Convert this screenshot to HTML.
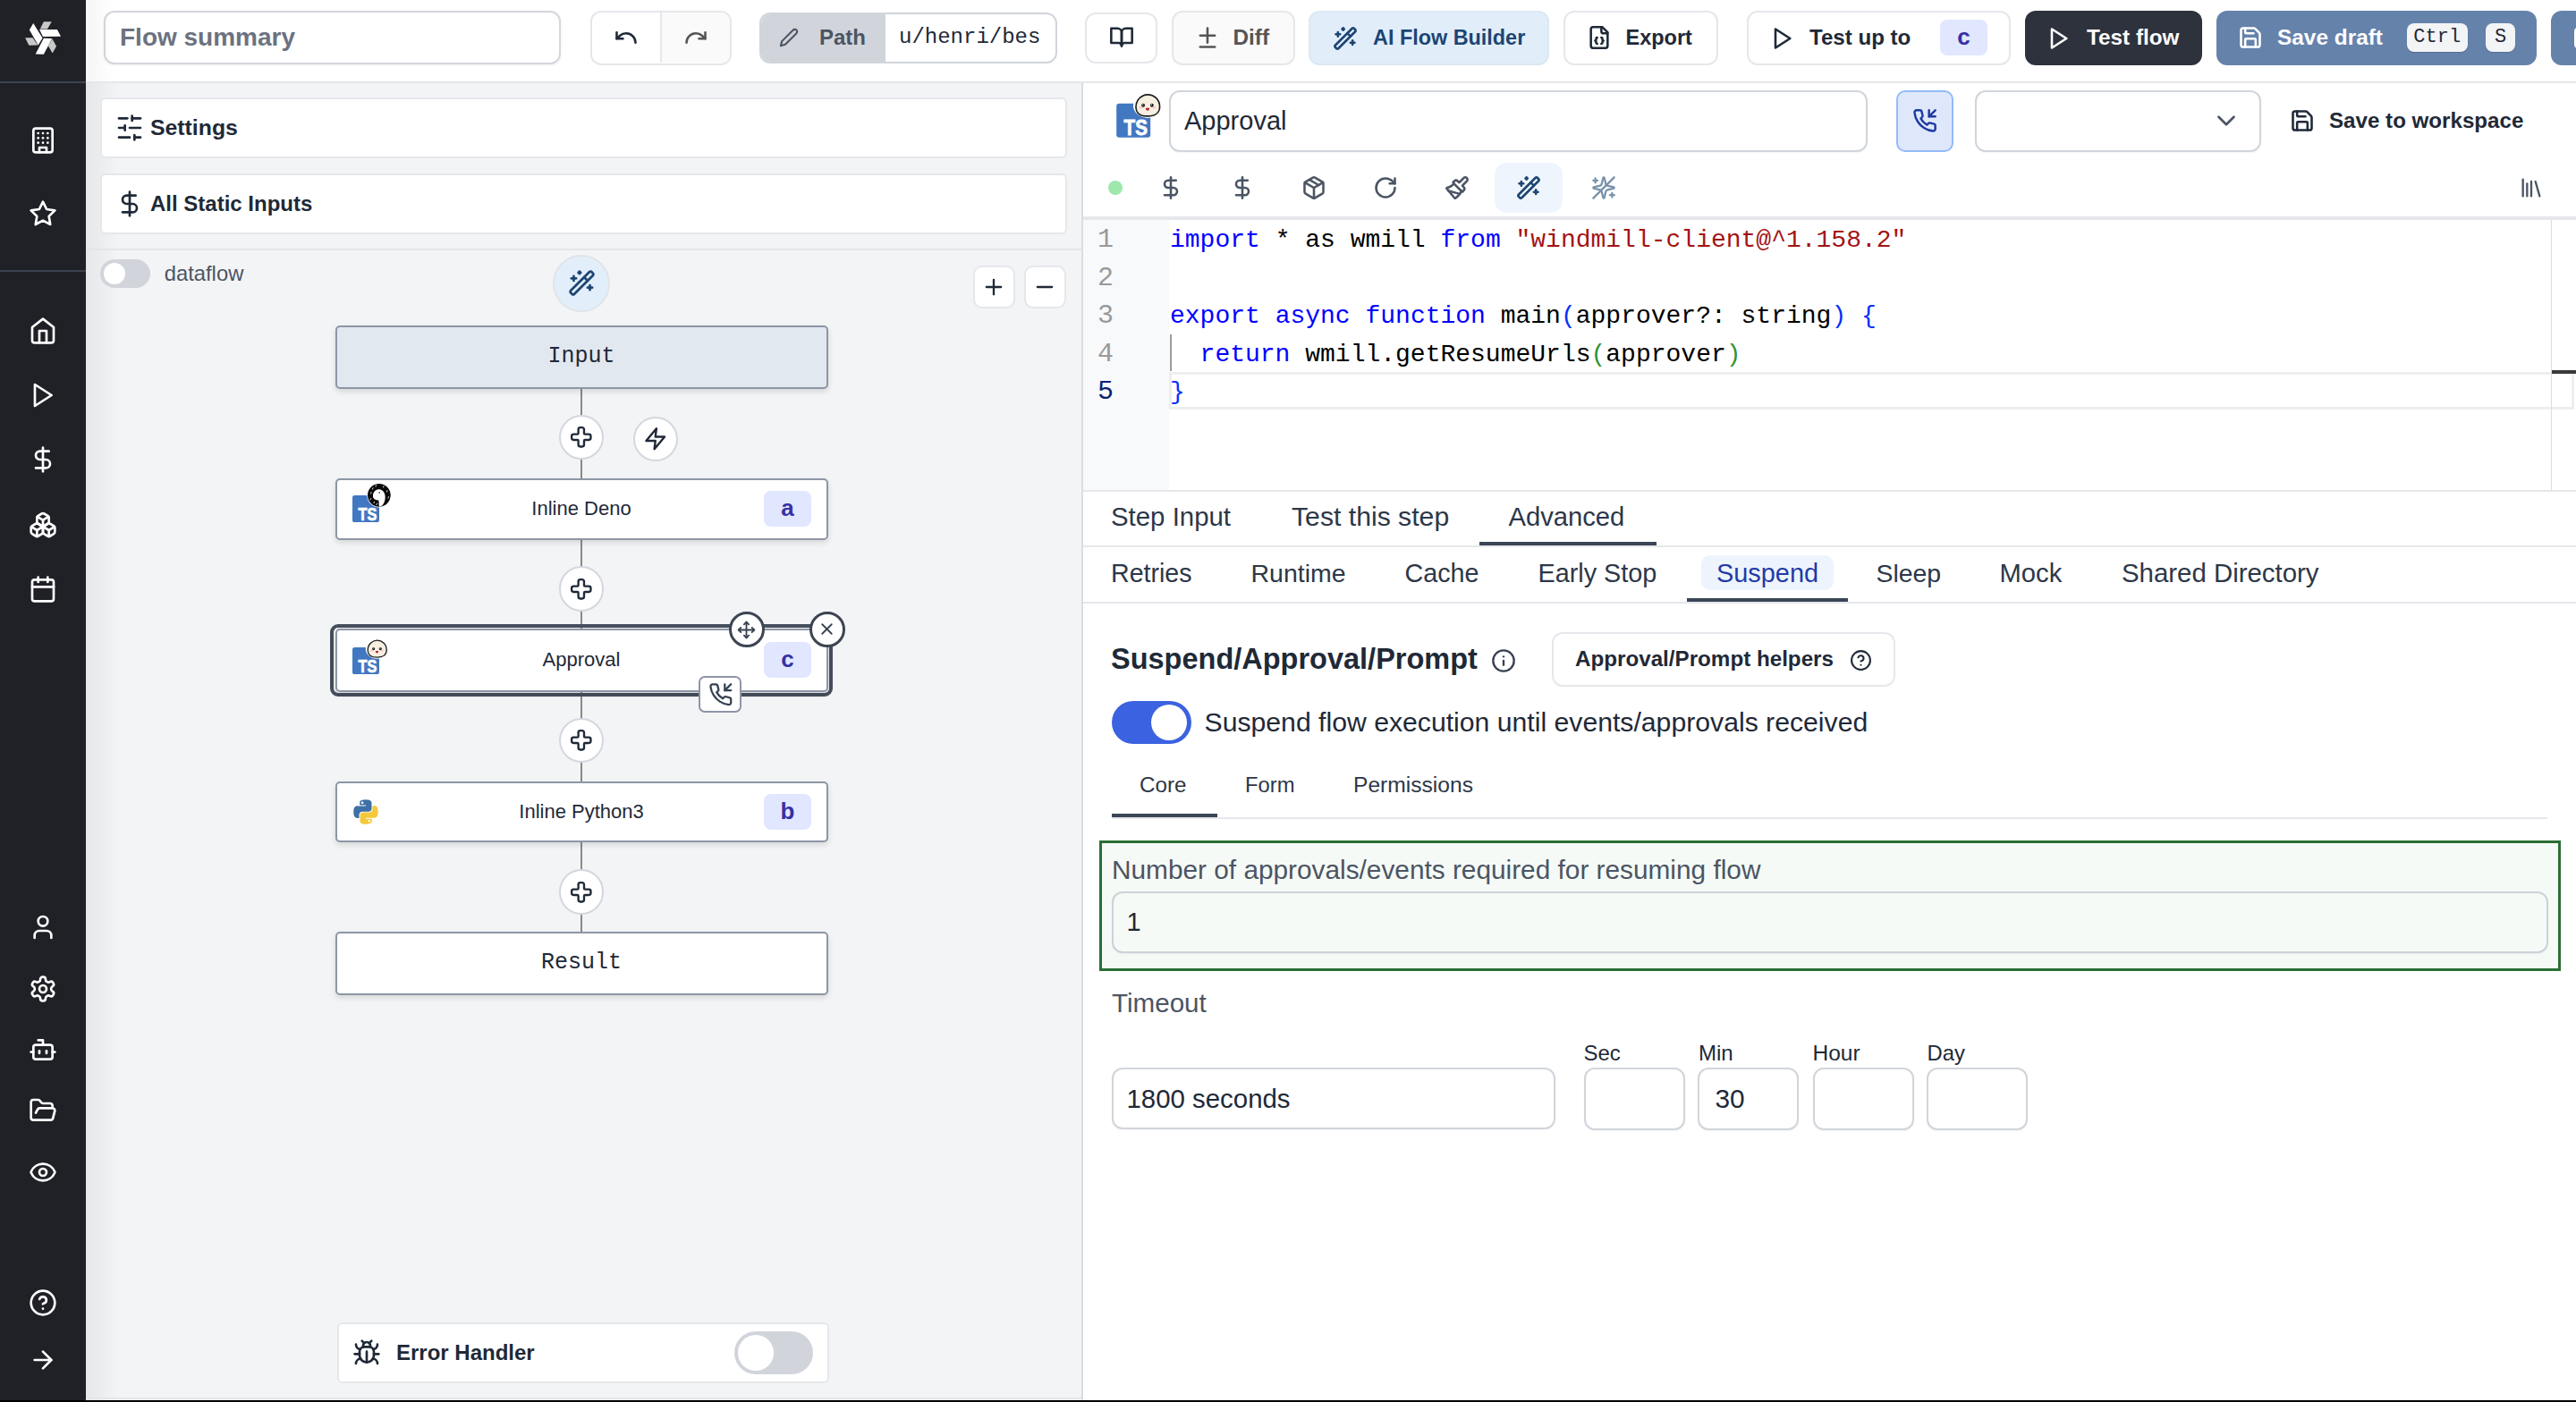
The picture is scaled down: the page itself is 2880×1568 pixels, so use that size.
<!DOCTYPE html>
<html><head><meta charset="utf-8">
<style>
html,body{margin:0;padding:0;width:2880px;height:1568px;overflow:hidden;background:#000;}
body{font-family:"Liberation Sans",sans-serif;color:#1f2937;position:relative;}
.a{position:absolute;box-sizing:border-box;}
.t{position:absolute;white-space:nowrap;line-height:40px;height:40px;}
.m{font-family:"Liberation Mono",monospace;}
.b{font-weight:700;}
svg{position:absolute;overflow:visible;}
.ic{fill:none;stroke-linecap:round;stroke-linejoin:round;}
</style></head><body>
<!-- main background -->
<div class="a" style="left:0;top:0;width:2880px;height:1566px;background:#fff;"></div>

<!-- SIDEBAR -->
<div class="a" style="left:0;top:0;width:96px;height:1566px;background:#202127;"></div>
<div class="a" style="left:0;top:91px;width:96px;height:2px;background:#3b4250;"></div>
<div class="a" style="left:0;top:302px;width:96px;height:2px;background:#3b4250;"></div>
<!-- logo -->
<svg style="left:16px;top:10px;" width="64" height="64" viewBox="0 0 1402 1402">
 <g fill="#fff">
  <polygon points="465,350 690,712 585,888 370,515"/>
  <polygon points="615,505 1050,505 1140,675 700,680"/>
  <polygon points="720,720 925,725 720,1110 520,1105"/>
 </g>
 <g fill="#c9c9c9">
  <polygon points="720,310 915,310 810,495 630,495"/>
  <polygon points="265,705 450,705 575,885 360,890"/>
  <polygon points="930,735 1030,915 935,1085 830,905"/>
 </g>
</svg>
<svg class="ic" style="left:32px;top:141px" width="32" height="32" viewBox="0 0 24 24" stroke="#fff" stroke-width="2"><rect width="16" height="20" x="4" y="2" rx="2" ry="2"/><path d="M9 22v-4h6v4"/><path d="M8 6h.01"/><path d="M16 6h.01"/><path d="M12 6h.01"/><path d="M12 10h.01"/><path d="M12 14h.01"/><path d="M16 10h.01"/><path d="M16 14h.01"/><path d="M8 10h.01"/><path d="M8 14h.01"/></svg>
<svg class="ic" style="left:32px;top:223px" width="32" height="32" viewBox="0 0 24 24" stroke="#fff" stroke-width="2"><polygon points="12 2 15.09 8.26 22 9.27 17 14.14 18.18 21.02 12 17.77 5.82 21.02 7 14.14 2 9.27 8.91 8.26 12 2"/></svg>
<svg class="ic" style="left:32px;top:354px" width="32" height="32" viewBox="0 0 24 24" stroke="#fff" stroke-width="2"><path d="m3 9 9-7 9 7v11a2 2 0 0 1-2 2H5a2 2 0 0 1-2-2z"/><polyline points="9 22 9 12 15 12 15 22"/></svg>
<svg class="ic" style="left:31px;top:426px" width="32" height="32" viewBox="0 0 24 24" stroke="#fff" stroke-width="2"><polygon points="6 3 20 12 6 21 6 3"/></svg>
<svg class="ic" style="left:32px;top:498px" width="32" height="32" viewBox="0 0 24 24" stroke="#fff" stroke-width="2"><line x1="12" x2="12" y1="2" y2="22"/><path d="M17 5H9.5a3.5 3.5 0 0 0 0 7h5a3.5 3.5 0 0 1 0 7H6"/></svg>
<svg class="ic" style="left:32px;top:571px" width="32" height="32" viewBox="0 0 24 24" stroke="#fff" stroke-width="2"><path d="M2.97 12.92A2 2 0 0 0 2 14.63v3.24a2 2 0 0 0 .97 1.71l3 1.8a2 2 0 0 0 2.06 0L12 19v-5.5l-5-3-4.03 2.42Z"/><path d="m7 16.5-4.74-2.85"/><path d="m7 16.5 5-3"/><path d="M7 16.5v5.17"/><path d="M12 13.5V19l3.970 2.38a2 2 0 0 0 2.06 0l3-1.8a2 2 0 0 0 .97-1.71v-3.24a2 2 0 0 0-.97-1.71L17 10.5l-5 3Z"/><path d="m17 16.5-5-3"/><path d="m17 16.5 4.74-2.85"/><path d="M17 16.5v5.17"/><path d="M7.97 4.42A2 2 0 0 0 7 6.13v4.37l5 3 5-3V6.13a2 2 0 0 0-.97-1.71l-3-1.8a2 2 0 0 0-2.06 0l-3 1.8Z"/><path d="M12 8 7.26 5.15"/><path d="m12 8 4.74-2.85"/><path d="M12 13.5V8"/></svg>
<svg class="ic" style="left:32px;top:643px" width="32" height="32" viewBox="0 0 24 24" stroke="#fff" stroke-width="2"><path d="M8 2v4"/><path d="M16 2v4"/><rect width="18" height="18" x="3" y="4" rx="2"/><path d="M3 10h18"/></svg>
<svg class="ic" style="left:32px;top:1021px" width="32" height="32" viewBox="0 0 24 24" stroke="#fff" stroke-width="2"><path d="M19 21v-2a4 4 0 0 0-4-4H9a4 4 0 0 0-4 4v2"/><circle cx="12" cy="7" r="4"/></svg>
<svg class="ic" style="left:32px;top:1090px" width="32" height="32" viewBox="0 0 24 24" stroke="#fff" stroke-width="2"><path d="M12.22 2h-.44a2 2 0 0 0-2 2v.18a2 2 0 0 1-1 1.73l-.43.25a2 2 0 0 1-2 0l-.15-.08a2 2 0 0 0-2.73.73l-.22.38a2 2 0 0 0 .73 2.73l.15.1a2 2 0 0 1 1 1.72v.51a2 2 0 0 1-1 1.74l-.15.09a2 2 0 0 0-.73 2.73l.22.38a2 2 0 0 0 2.73.73l.15-.08a2 2 0 0 1 2 0l.43.25a2 2 0 0 1 1 1.73V20a2 2 0 0 0 2 2h.44a2 2 0 0 0 2-2v-.18a2 2 0 0 1 1-1.73l.43-.25a2 2 0 0 1 2 0l.15.08a2 2 0 0 0 2.73-.73l.22-.39a2 2 0 0 0-.73-2.73l-.15-.08a2 2 0 0 1-1-1.74v-.5a2 2 0 0 1 1-1.74l.15-.09a2 2 0 0 0 .73-2.73l-.22-.38a2 2 0 0 0-2.73-.73l-.15.08a2 2 0 0 1-2 0l-.43-.25a2 2 0 0 1-1-1.73V4a2 2 0 0 0-2-2z"/><circle cx="12" cy="12" r="3"/></svg>
<svg class="ic" style="left:32px;top:1158px" width="32" height="32" viewBox="0 0 24 24" stroke="#fff" stroke-width="2"><path d="M12 8V4H8"/><rect width="16" height="12" x="4" y="8" rx="2"/><path d="M2 14h2"/><path d="M20 14h2"/><path d="M15 13v2"/><path d="M9 13v2"/></svg>
<svg class="ic" style="left:32px;top:1226px" width="32" height="32" viewBox="0 0 24 24" stroke="#fff" stroke-width="2"><path d="m6 14 1.5-2.9A2 2 0 0 1 9.24 10H20a2 2 0 0 1 1.94 2.5l-1.54 6a2 2 0 0 1-1.95 1.5H4a2 2 0 0 1-2-2V5a2 2 0 0 1 2-2h3.9a2 2 0 0 1 1.69.9l.81 1.2a2 2 0 0 0 1.67.9H18a2 2 0 0 1 2 2v2"/></svg>
<svg class="ic" style="left:32px;top:1295px" width="32" height="32" viewBox="0 0 24 24" stroke="#fff" stroke-width="2"><path d="M2.062 12.348a1 1 0 0 1 0-.696 10.75 10.75 0 0 1 19.876 0 1 1 0 0 1 0 .696 10.75 10.75 0 0 1-19.876 0"/><circle cx="12" cy="12" r="3"/></svg>
<svg class="ic" style="left:32px;top:1441px" width="32" height="32" viewBox="0 0 24 24" stroke="#fff" stroke-width="2"><circle cx="12" cy="12" r="10"/><path d="M9.09 9a3 3 0 0 1 5.83 1c0 2-3 3-3 3"/><path d="M12 17h.01"/></svg>
<svg class="ic" style="left:32px;top:1505px" width="32" height="32" viewBox="0 0 24 24" stroke="#fff" stroke-width="2"><path d="M5 12h14"/><path d="m12 5 7 7-7 7"/></svg>

<!-- TOPBAR -->
<div class="a" style="left:96px;top:0;width:2784px;height:91px;background:#fff;"></div>
<div class="a" style="left:96px;top:91px;width:2784px;height:2px;background:#e5e7eb;"></div>

<!-- flow summary -->
<div class="a" style="left:116px;top:12px;width:511px;height:60px;border:2px solid #d4d7dd;border-radius:12px;background:#fff;box-shadow:0 1px 3px rgba(0,0,0,.07);"></div>
<div class="t b" style="left:134px;top:22px;font-size:28px;color:#6b7280;">Flow summary</div>
<!-- undo/redo -->
<div class="a" style="left:660px;top:12px;width:158px;height:61px;border:2px solid #e5e7eb;border-radius:12px;background:#fff;overflow:hidden;">
  <div class="a" style="left:76px;top:0;width:78px;height:56px;background:#fafafa;border-left:2px solid #e5e7eb;"></div>
</div>
<svg class="ic" style="left:686.0px;top:28.0px" width="28" height="28" viewBox="0 0 24 24" stroke="#1f2937" stroke-width="2.2"><path d="M3 7v6h6"/><path d="M21 17a9 9 0 0 0-9-9 9 9 0 0 0-6 2.3L3 13"/></svg>
<svg class="ic" style="left:764.0px;top:28.0px" width="28" height="28" viewBox="0 0 24 24" stroke="#555" stroke-width="2.2"><path d="M21 7v6h-6"/><path d="M3 17a9 9 0 0 1 9-9 9 9 0 0 1 6 2.3l3 2.7"/></svg>
<!-- path -->
<div class="a" style="left:849px;top:14px;width:333px;height:57px;border:2px solid #d1d5db;border-radius:12px;background:#fff;overflow:hidden;">
  <div class="a" style="left:-2px;top:-2px;width:141px;height:56px;background:#d1d5db;"></div>
</div>
<svg class="ic" style="left:870.6px;top:31.25px" width="22" height="22" viewBox="0 0 24 24" stroke="#4b5563" stroke-width="2.3"><path d="M17 3a2.85 2.83 0 1 1 4 4L7.5 20.5 2 22l1.5-5.5Z"/></svg>
<div class="t b" style="left:916px;top:22px;font-size:24px;color:#4b5563;">Path</div>
<div class="t m" style="left:1005px;top:22px;font-size:24px;color:#1f2937;">u/henri/bes</div>
<!-- book -->
<div class="a" style="left:1213px;top:14px;width:81px;height:57px;border:2px solid #e5e7eb;border-radius:12px;background:#fff;"></div>
<svg class="ic" style="left:1240.0px;top:27px" width="28" height="28" viewBox="0 0 24 24" stroke="#1f2937" stroke-width="2.2"><path d="M2 4h6a4 4 0 0 1 4 4v13a3 3 0 0 0-3-3H2z"/><path d="M22 4h-6a4 4 0 0 0-4 4v13a3 3 0 0 1 3-3h7z"/></svg>
<!-- diff -->
<div class="a" style="left:1310px;top:12px;width:138px;height:61px;border:2px solid #e5e7eb;border-radius:12px;background:#fafafa;"></div>
<svg class="ic" style="left:1336.0px;top:28.0px" width="28" height="28" viewBox="0 0 24 24" stroke="#555" stroke-width="2.2"><path d="M12 3v14"/><path d="M5 10h14"/><path d="M5 21h14"/></svg>
<div class="t b" style="left:1378.5px;top:22px;font-size:24.3px;color:#555;">Diff</div>
<!-- AI flow builder -->
<div class="a" style="left:1463px;top:12px;width:269px;height:61px;border:2px solid #dbe8f4;border-radius:12px;background:#e1eefa;"></div>
<svg class="ic" style="left:1490px;top:28.5px" width="28" height="28" viewBox="0 0 24 24" stroke="#1d4573" stroke-width="2.2"><path d="m21.64 3.64-1.28-1.28a1.21 1.21 0 0 0-1.72 0L2.36 18.64a1.21 1.21 0 0 0 0 1.72l1.28 1.28a1.2 1.2 0 0 0 1.72 0L21.640 5.36a1.2 1.2 0 0 0 0-1.72"/><path d="m14 7 3 3"/><path d="M5 6v4"/><path d="M19 14v4"/><path d="M10 2v2"/><path d="M7 8H3"/><path d="M21 16h-4"/><path d="M11 3H9"/></svg>
<div class="t b" style="left:1535px;top:22px;font-size:23.4px;color:#1d4573;">AI Flow Builder</div>
<!-- export -->
<div class="a" style="left:1748px;top:12px;width:173px;height:61px;border:2px solid #e5e7eb;border-radius:12px;background:#fff;"></div>
<svg class="ic" style="left:1774.0px;top:28.0px" width="28" height="28" viewBox="0 0 24 24" stroke="#1f2937" stroke-width="2.2"><path d="M15 2H6a2 2 0 0 0-2 2v16a2 2 0 0 0 2 2h12a2 2 0 0 0 2-2V7Z"/><path d="M14 2v4a2 2 0 0 0 2 2h4"/><path d="M10 12a1 1 0 0 0-1 1v1a1 1 0 0 1-1 1 1 1 0 0 1 1 1v1a1 1 0 0 0 1 1"/><path d="M14 18a1 1 0 0 0 1-1v-1a1 1 0 0 1 1-1 1 1 0 0 1-1-1v-1a1 1 0 0 0-1-1"/></svg>
<div class="t b" style="left:1817.5px;top:22px;font-size:23.5px;color:#1f2937;">Export</div>
<!-- test up to -->
<div class="a" style="left:1953px;top:12px;width:295px;height:61px;border:2px solid #e5e7eb;border-radius:12px;background:#fff;"></div>
<svg class="ic" style="left:1978.0px;top:28.5px" width="28" height="28" viewBox="0 0 24 24" stroke="#1f2937" stroke-width="2.2"><polygon points="6 3 20 12 6 21 6 3"/></svg>
<div class="t b" style="left:2023px;top:22px;font-size:24.1px;color:#1f2937;">Test up to</div>
<div class="a" style="left:2169px;top:22px;width:53px;height:40px;border-radius:8px;background:#e0e7ff;"></div>
<div class="t b" style="left:2169px;top:21px;width:53px;text-align:center;font-size:26px;color:#3730a3;">c</div>
<!-- test flow -->
<div class="a" style="left:2264px;top:12px;width:198px;height:60.5px;border-radius:12px;background:#2e323c;"></div>
<svg class="ic" style="left:2287.0px;top:28.5px" width="28" height="28" viewBox="0 0 24 24" stroke="#fff" stroke-width="2.2"><polygon points="6 3 20 12 6 21 6 3"/></svg>
<div class="t b" style="left:2333px;top:22px;font-size:24.3px;color:#fff;">Test flow</div>
<!-- save draft -->
<div class="a" style="left:2478px;top:12px;width:358px;height:60.5px;border-radius:12px;background:#6582ab;"></div>
<svg class="ic" style="left:2502.0px;top:28.0px" width="28" height="28" viewBox="0 0 24 24" stroke="#fff" stroke-width="2.2"><path d="M15.2 3a2 2 0 0 1 1.4.6l3.8 3.8a2 2 0 0 1 .6 1.4V19a2 2 0 0 1-2 2H5a2 2 0 0 1-2-2V5a2 2 0 0 1 2-2z"/><path d="M17 21v-7a1 1 0 0 0-1-1H8a1 1 0 0 0-1 1v7"/><path d="M7 3v4a1 1 0 0 0 1 1h7"/></svg>
<div class="t b" style="left:2546px;top:22px;font-size:24.4px;color:#fff;">Save draft</div>
<div class="a" style="left:2691px;top:26px;width:67.5px;height:32px;border-radius:8px;background:#f3f4f6;box-shadow:0 1px 1px rgba(0,0,0,.15);"></div>
<div class="t m" style="left:2691px;top:22px;width:67.5px;text-align:center;font-size:22px;color:#1f2937;">Ctrl</div>
<div class="a" style="left:2779px;top:26px;width:33px;height:32px;border-radius:8px;background:#f3f4f6;box-shadow:0 1px 1px rgba(0,0,0,.15);"></div>
<div class="t m" style="left:2779px;top:22px;width:33px;text-align:center;font-size:22px;color:#1f2937;">S</div>
<!-- cut-off button -->
<div class="a" style="left:2852px;top:12px;width:60px;height:60.5px;border-radius:12px;background:#6582ab;"></div>
<div class="a" style="left:2878px;top:31px;width:12px;height:22.5px;border-radius:4px;border:2.5px solid #fff;"></div>


<!-- LEFT PANEL -->
<div class="a" style="left:96px;top:93px;width:1113px;height:1473px;background:#f3f4f6;"></div>
<div class="a" style="left:1209px;top:93px;width:2px;height:1473px;background:#dcdcde;"></div>

<!-- left shadow -->
<div class="a" style="left:96px;top:93px;width:36px;height:1473px;background:linear-gradient(90deg,rgba(0,0,0,.055),rgba(0,0,0,0));"></div>
<div class="a" style="left:96px;top:0px;width:30px;height:91px;background:linear-gradient(90deg,rgba(0,0,0,.04),rgba(0,0,0,0));"></div>
<!-- settings -->
<div class="a" style="left:112px;top:109px;width:1081px;height:68px;border:2px solid #e5e7eb;border-radius:6px;background:#fff;"></div>
<svg class="ic" style="left:129px;top:127px" width="32" height="32" viewBox="0 0 24 24" stroke="#1f2937" stroke-width="2"><line x1="21" x2="14" y1="4" y2="4"/><line x1="10" x2="3" y1="4" y2="4"/><line x1="21" x2="12" y1="12" y2="12"/><line x1="8" x2="3" y1="12" y2="12"/><line x1="21" x2="16" y1="20" y2="20"/><line x1="12" x2="3" y1="20" y2="20"/><line x1="14" x2="14" y1="2" y2="6"/><line x1="8" x2="8" y1="10" y2="14"/><line x1="16" x2="16" y1="18" y2="22"/></svg>
<div class="t b" style="left:168px;top:122.5px;font-size:24.8px;color:#1f2937;">Settings</div>
<div class="a" style="left:112px;top:194px;width:1081px;height:68px;border:2px solid #e5e7eb;border-radius:6px;background:#fff;"></div>
<svg class="ic" style="left:129px;top:212px" width="32" height="32" viewBox="0 0 24 24" stroke="#1f2937" stroke-width="2"><line x1="12" x2="12" y1="2" y2="22"/><path d="M17 5H9.5a3.5 3.5 0 0 0 0 7h5a3.5 3.5 0 0 1 0 7H6"/></svg>
<div class="t b" style="left:168px;top:207.5px;font-size:24px;color:#1f2937;">All Static Inputs</div>
<div class="a" style="left:96px;top:278px;width:1113px;height:2px;background:#e3e5e8;"></div>
<!-- dataflow toggle -->
<div class="a" style="left:112px;top:289.5px;width:56px;height:32.5px;border-radius:17px;background:#d1d5db;"></div>
<div class="a" style="left:116px;top:293.6px;width:24px;height:24px;border-radius:50%;background:#fff;"></div>
<div class="t" style="left:183.7px;top:286.2px;font-size:23.8px;color:#4b5563;">dataflow</div>
<!-- wand circle -->
<div class="a" style="left:617.9px;top:284.6px;width:64px;height:64px;border-radius:50%;border:2px solid #e1e4e9;background:#e2effa;"></div>
<svg class="ic" style="left:634.6px;top:301px" width="31" height="31" viewBox="0 0 24 24" stroke="#1d4573" stroke-width="2.1"><path d="m21.64 3.64-1.28-1.28a1.21 1.21 0 0 0-1.72 0L2.36 18.64a1.21 1.21 0 0 0 0 1.72l1.28 1.28a1.2 1.2 0 0 0 1.72 0L21.64 5.36a1.2 1.2 0 0 0 0-1.72"/><path d="m14 7 3 3"/><path d="M5 6v4"/><path d="M19 14v4"/><path d="M10 2v2"/><path d="M7 8H3"/><path d="M21 16h-4"/><path d="M11 3H9"/></svg>
<!-- zoom buttons -->
<div class="a" style="left:1087.5px;top:296.5px;width:47px;height:48.5px;border:2px solid #e5e7eb;border-radius:10px;background:#fff;"></div>
<svg class="ic" style="left:1096.9px;top:306.7px" width="28" height="28" viewBox="0 0 24 24" stroke="#1f2937" stroke-width="2"><path d="M5 12h14"/><path d="M12 5v14"/></svg>
<div class="a" style="left:1144.5px;top:296.5px;width:47px;height:48.5px;border:2px solid #e5e7eb;border-radius:10px;background:#fff;"></div>
<svg class="ic" style="left:1154.1px;top:306.7px" width="28" height="28" viewBox="0 0 24 24" stroke="#1f2937" stroke-width="2"><path d="M5 12h14"/></svg>
<!-- edges -->
<div class="a" style="left:649px;top:434px;width:2px;height:608px;background:#8a8a8a;"></div>
<div class="a" style="left:374.5px;top:363.5px;width:551px;height:71.5px;border:2px solid #8d96a6;border-radius:5px;background:#e2e8f0;box-shadow:0 3px 6px rgba(0,0,0,.12);"></div>
<div class="t m" style="left:375.5px;top:379.25px;width:549px;text-align:center;font-size:25px;color:#1f2937;">Input</div>
<div class="a" style="left:624.8px;top:463.9px;width:50.2px;height:50.2px;border-radius:50%;border:2px solid #d4d7dd;background:#fff;"></div>
<svg class="ic" style="left:637.3000000000001px;top:476.2px" width="25.6" height="25.6" viewBox="0 0 24 24" stroke="#1f2937" stroke-width="2.2"><path d="M4 9a2 2 0 0 0-2 2v2a2 2 0 0 0 2 2h4a1 1 0 0 1 1 1v4a2 2 0 0 0 2 2h2a2 2 0 0 0 2-2v-4a1 1 0 0 1 1-1h4a2 2 0 0 0 2-2v-2a2 2 0 0 0-2-2h-4a1 1 0 0 1-1-1V4a2 2 0 0 0-2-2h-2a2 2 0 0 0-2 2v4a1 1 0 0 1-1 1z"/></svg><div class="a" style="left:707.85px;top:465.75px;width:50.5px;height:50.5px;border-radius:50%;border:2px solid #d4d7dd;background:#fff;"></div>
<svg class="ic" style="left:719.3px;top:477.25px" width="27.5" height="27.5" viewBox="0 0 24 24" stroke="#1f2937" stroke-width="2.1"><path d="M13 2 3 14h9l-1 8 10-12h-9l1-8z"/></svg><div class="a" style="left:374.5px;top:534.5px;width:551px;height:69.0px;border:2px solid #8d96a6;border-radius:5px;background:#fff;box-shadow:0 3px 6px rgba(0,0,0,.12);"></div>
<div class="t" style="left:375.5px;top:549.0px;width:549px;text-align:center;font-size:22px;color:#1f2937;">Inline Deno</div>
<div class="a" style="left:854px;top:549.0px;width:53px;height:40px;border-radius:8px;background:#e0e7ff;"></div>
<div class="t b" style="left:854px;top:548.0px;width:53px;text-align:center;font-size:26px;color:#3730a3;">a</div>
<svg style="left:382.0px;top:540.0px" width="54.0" height="46.0" viewBox="-12 -14 54 46"><rect x="0" y="0" width="30" height="30" rx="2.6" fill="#4277c2"/><text x="6.6" y="27.8" textLength="20.8" lengthAdjust="spacingAndGlyphs" font-family="Liberation Sans" font-weight="700" font-size="19.6" fill="#fff" stroke="#fff" stroke-width="0.7">TS</text><circle cx="29.85" cy="-0.15" r="13.6" fill="#fff"/><circle cx="29.85" cy="-0.15" r="12.85" fill="#0a0a0a"/><path d="M23,1.2 C22.6,-4.8 27.5,-7.2 31,-6.6 C35,-5.8 37.2,-1.6 36.6,3.6 C36.2,7 35,9.6 33.5,11.2 C32,12.2 30.8,12.4 29.8,12.5 L29.4,5.4 C26.5,5.4 23.3,4.6 23,1.2 Z" fill="#fff"/><circle cx="30.2" cy="-3" r=".8" fill="#0a0a0a"/><g stroke="#fff" stroke-width=".9" stroke-linecap="round"><path d="M20.5,-2 l.5,-1.3"/><path d="M22.5,-7 l.5,-1.3"/><path d="M26,-10 l.5,-1.3"/><path d="M34.5,-9 l.5,-1.3"/><path d="M38.5,-4 l.5,-1.3"/><path d="M40,3 l.5,-1.3"/><path d="M20,5 l.5,-1.3"/><path d="M24,8.5 l.5,-1.3"/><path d="M27,10.5 l.5,-1.3"/></g></svg><div class="a" style="left:624.8px;top:633.4px;width:50.2px;height:50.2px;border-radius:50%;border:2px solid #d4d7dd;background:#fff;"></div>
<svg class="ic" style="left:637.3000000000001px;top:645.7px" width="25.6" height="25.6" viewBox="0 0 24 24" stroke="#1f2937" stroke-width="2.2"><path d="M4 9a2 2 0 0 0-2 2v2a2 2 0 0 0 2 2h4a1 1 0 0 1 1 1v4a2 2 0 0 0 2 2h2a2 2 0 0 0 2-2v-4a1 1 0 0 1 1-1h4a2 2 0 0 0 2-2v-2a2 2 0 0 0-2-2h-4a1 1 0 0 1-1-1V4a2 2 0 0 0-2-2h-2a2 2 0 0 0-2 2v4a1 1 0 0 1-1 1z"/></svg><div class="a" style="left:369px;top:698px;width:561.5px;height:81px;border:4px solid #474f5e;border-radius:9px;"></div>
<div class="a" style="left:374.5px;top:703.0px;width:551px;height:70.5px;border:2px solid #8d96a6;border-radius:5px;background:#fff;box-shadow:0 3px 6px rgba(0,0,0,.12);"></div>
<div class="t" style="left:375.5px;top:718.25px;width:549px;text-align:center;font-size:22px;color:#1f2937;">Approval</div>
<div class="a" style="left:854px;top:718.25px;width:53px;height:40px;border-radius:8px;background:#e0e7ff;"></div>
<div class="t b" style="left:854px;top:717.25px;width:53px;text-align:center;font-size:26px;color:#3730a3;">c</div>
<svg style="left:382.0px;top:709.5px" width="54.0" height="46.0" viewBox="-12 -14 54 46"><rect x="0" y="0" width="30" height="30" rx="2.6" fill="#4277c2"/><text x="6.6" y="27.8" textLength="20.8" lengthAdjust="spacingAndGlyphs" font-family="Liberation Sans" font-weight="700" font-size="19.6" fill="#fff" stroke="#fff" stroke-width="0.7">TS</text><ellipse cx="27.6" cy="1.8" rx="12.8" ry="11" fill="#fff"/><path d="M17.2,3.5 C17,-3.5 22.5,-7.6 27.3,-7.8 C33,-8 38.2,-3.6 38.2,3 C38.2,8.6 33.5,11.2 27.6,11.2 C21.5,11.2 17.4,9 17.2,3.5 Z" fill="#f7efdf" stroke="#1a1a1a" stroke-width="1.3"/><circle cx="23.6" cy="1.6" r="1.55" fill="#1a1a1a"/><circle cx="31.3" cy="1.6" r="1.55" fill="#1a1a1a"/><circle cx="23.3" cy="1.1" r=".5" fill="#fff"/><circle cx="31" cy="1.1" r=".5" fill="#fff"/><ellipse cx="21.6" cy="3.6" rx="1.6" ry=".8" fill="#f6bfd0"/><ellipse cx="33.3" cy="3.6" rx="1.6" ry=".8" fill="#f6bfd0"/><path d="M25.8,4 h3.4 c0,1.6 -0.8,2.4 -1.7,2.4 c-0.9,0 -1.7,-0.8 -1.7,-2.4z" fill="#b3262e"/></svg><div class="a" style="left:814.9px;top:684px;width:40px;height:40px;border-radius:50%;border:3.2px solid #3d4452;background:#fff;"></div>
<svg class="ic" style="left:824.4px;top:693.5px" width="21" height="21" viewBox="0 0 24 24" stroke="#374151" stroke-width="2.1"><path d="M12 2v20"/><path d="m15 19-3 3-3-3"/><path d="m19 9 3 3-3 3"/><path d="M2 12h20"/><path d="m5 9-3 3 3 3"/><path d="m9 5 3-3 3 3"/></svg>
<div class="a" style="left:904.9px;top:683.8px;width:40px;height:40px;border-radius:50%;border:3.2px solid #3d4452;background:#fff;"></div>
<svg class="ic" style="left:914.4px;top:693.3px" width="21" height="21" viewBox="0 0 24 24" stroke="#374151" stroke-width="2.1"><path d="M18 6 6 18"/><path d="m6 6 12 12"/></svg>
<div class="a" style="left:781px;top:756px;width:48px;height:41px;border:2px solid #8d96a6;border-radius:7px;background:#fff;"></div>
<svg class="ic" style="left:791.5px;top:762.75px" width="27.5" height="27.5" viewBox="0 0 24 24" stroke="#374151" stroke-width="2"><polyline points="16 2 16 8 22 8"/><line x1="22" x2="16" y1="2" y2="8"/><path d="M22 16.92v3a2 2 0 0 1-2.18 2 19.79 19.79 0 0 1-8.63-3.07 19.5 19.5 0 0 1-6-6 19.79 19.79 0 0 1-3.07-8.67A2 2 0 0 1 4.11 2h3a2 2 0 0 1 2 1.72 12.84 12.84 0 0 0 .7 2.81 2 2 0 0 1-.45 2.11L8.09 9.91a16 16 0 0 0 6 6l1.27-1.27a2 2 0 0 1 2.11-.45 12.84 12.84 0 0 0 2.81.7A2 2 0 0 1 22 16.92z"/></svg>
<div class="a" style="left:624.8px;top:802.9px;width:50.2px;height:50.2px;border-radius:50%;border:2px solid #d4d7dd;background:#fff;"></div>
<svg class="ic" style="left:637.3000000000001px;top:815.2px" width="25.6" height="25.6" viewBox="0 0 24 24" stroke="#1f2937" stroke-width="2.2"><path d="M4 9a2 2 0 0 0-2 2v2a2 2 0 0 0 2 2h4a1 1 0 0 1 1 1v4a2 2 0 0 0 2 2h2a2 2 0 0 0 2-2v-4a1 1 0 0 1 1-1h4a2 2 0 0 0 2-2v-2a2 2 0 0 0-2-2h-4a1 1 0 0 1-1-1V4a2 2 0 0 0-2-2h-2a2 2 0 0 0-2 2v4a1 1 0 0 1-1 1z"/></svg><div class="a" style="left:374.5px;top:873.5px;width:551px;height:68.5px;border:2px solid #8d96a6;border-radius:5px;background:#fff;box-shadow:0 3px 6px rgba(0,0,0,.12);"></div>
<div class="t" style="left:375.5px;top:887.75px;width:549px;text-align:center;font-size:22px;color:#1f2937;">Inline Python3</div>
<div class="a" style="left:854px;top:887.75px;width:53px;height:40px;border-radius:8px;background:#e0e7ff;"></div>
<div class="t b" style="left:854px;top:886.75px;width:53px;text-align:center;font-size:26px;color:#3730a3;">b</div>
<svg style="left:394px;top:892.5px" width="30" height="30" viewBox="0 0 24 24"><path fill="#3d71a6" d="M11.9 1C6.3 1 6.6 3.4 6.6 3.4v2.5h5.4v.8H4.5S1 6.3 1 12s3.1 5.5 3.1 5.5H6v-2.7s-.1-3.1 3-3.1h5.3s2.9 0 2.9-2.8V4.1S17.7 1 11.9 1zM8.9 2.8c.5 0 1 .4 1 1s-.4 1-1 1-1-.4-1-1 .5-1 1-1z"/><path fill="#f5c83c" d="M12.1 23c5.6 0 5.3-2.4 5.3-2.4v-2.5H12v-.8h7.5s3.5.4 3.5-5.3-3.1-5.5-3.1-5.5H18v2.7s.1 3.1-3 3.1H9.7s-2.9 0-2.9 2.8v4.8S6.3 23 12.1 23zm3-1.8c-.5 0-1-.4-1-1s.4-1 1-1 1 .4 1 1-.5 1-1 1z"/></svg><div class="a" style="left:624.8px;top:972.4px;width:50.2px;height:50.2px;border-radius:50%;border:2px solid #d4d7dd;background:#fff;"></div>
<svg class="ic" style="left:637.3000000000001px;top:984.7px" width="25.6" height="25.6" viewBox="0 0 24 24" stroke="#1f2937" stroke-width="2.2"><path d="M4 9a2 2 0 0 0-2 2v2a2 2 0 0 0 2 2h4a1 1 0 0 1 1 1v4a2 2 0 0 0 2 2h2a2 2 0 0 0 2-2v-4a1 1 0 0 1 1-1h4a2 2 0 0 0 2-2v-2a2 2 0 0 0-2-2h-4a1 1 0 0 1-1-1V4a2 2 0 0 0-2-2h-2a2 2 0 0 0-2 2v4a1 1 0 0 1-1 1z"/></svg><div class="a" style="left:374.5px;top:1041.5px;width:551px;height:71.5px;border:2px solid #8d96a6;border-radius:5px;background:#fff;box-shadow:0 3px 6px rgba(0,0,0,.12);"></div>
<div class="t m" style="left:375.5px;top:1057.25px;width:549px;text-align:center;font-size:25px;color:#1f2937;">Result</div>

<!-- error handler -->
<div class="a" style="left:377px;top:1479px;width:550px;height:68px;border:2px solid #e5e7eb;border-radius:6px;background:#fff;"></div>
<svg class="ic" style="left:394px;top:1496.5px" width="32" height="32" viewBox="0 0 24 24" stroke="#1f2937" stroke-width="2"><path d="m8 2 1.88 1.88"/><path d="M14.12 3.88 16 2"/><path d="M9 7.13v-1a3.003 3.003 0 1 1 6 0v1"/><path d="M12 20c-3.3 0-6-2.7-6-6v-3a4 4 0 0 1 4-4h4a4 4 0 0 1 4 4v3c0 3.3-2.700 6-6 6"/><path d="M12 20v-9"/><path d="M6.53 9C4.6 8.8 3 7.1 3 5"/><path d="M6 13H2"/><path d="M3 21c0-2.1 1.7-3.9 3.8-4"/><path d="M20.97 5c0 2.1-1.6 3.8-3.5 4"/><path d="M22 13h-4"/><path d="M17.2 17c2.1.1 3.8 1.9 3.8 4"/></svg>
<div class="t b" style="left:443px;top:1492.5px;font-size:24px;color:#1f2937;">Error Handler</div>
<div class="a" style="left:821px;top:1489px;width:88px;height:48px;border-radius:24px;background:#d1d5db;"></div>
<div class="a" style="left:825px;top:1493px;width:40px;height:40px;border-radius:50%;background:#fff;"></div>
<div class="a" style="left:96px;top:1563px;width:1113px;height:2px;background:#e3e5e8;"></div>



<!-- RIGHT PANEL -->

<!-- header -->
<svg style="left:1232.8px;top:98.26666666666667px" width="68.39999999999999" height="58.266666666666666" viewBox="-12 -14 54 46"><rect x="0" y="0" width="30" height="30" rx="2.6" fill="#4277c2"/><text x="6.6" y="27.8" textLength="20.8" lengthAdjust="spacingAndGlyphs" font-family="Liberation Sans" font-weight="700" font-size="19.6" fill="#fff" stroke="#fff" stroke-width="0.7">TS</text><ellipse cx="27.6" cy="1.8" rx="12.8" ry="11" fill="#fff"/><path d="M17.2,3.5 C17,-3.5 22.5,-7.6 27.3,-7.8 C33,-8 38.2,-3.6 38.2,3 C38.2,8.6 33.5,11.2 27.6,11.2 C21.5,11.2 17.4,9 17.2,3.5 Z" fill="#f7efdf" stroke="#1a1a1a" stroke-width="1.3"/><circle cx="23.6" cy="1.6" r="1.55" fill="#1a1a1a"/><circle cx="31.3" cy="1.6" r="1.55" fill="#1a1a1a"/><circle cx="23.3" cy="1.1" r=".5" fill="#fff"/><circle cx="31" cy="1.1" r=".5" fill="#fff"/><ellipse cx="21.6" cy="3.6" rx="1.6" ry=".8" fill="#f6bfd0"/><ellipse cx="33.3" cy="3.6" rx="1.6" ry=".8" fill="#f6bfd0"/><path d="M25.8,4 h3.4 c0,1.6 -0.8,2.4 -1.7,2.4 c-0.9,0 -1.7,-0.8 -1.7,-2.4z" fill="#b3262e"/></svg>
<div class="a" style="left:1306.5px;top:100.5px;width:781.5px;height:69px;border:2px solid #d1d5db;border-radius:12px;background:#fff;box-shadow:0 1px 2px rgba(0,0,0,.05);"></div>
<div class="t" style="left:1324px;top:115px;font-size:29px;color:#1f2937;">Approval</div>
<div class="a" style="left:2119.5px;top:100.5px;width:64.5px;height:69px;border:2px solid #93bbf7;border-radius:10px;background:#dfe8fb;"></div>
<svg class="ic" style="left:2138.05px;top:120.8px" width="28" height="28" viewBox="0 0 24 24" stroke="#1e3a9f" stroke-width="2.1"><polyline points="16 2 16 8 22 8"/><line x1="22" x2="16" y1="2" y2="8"/><path d="M22 16.92v3a2 2 0 0 1-2.18 2 19.79 19.79 0 0 1-8.63-3.07 19.5 19.5 0 0 1-6-6 19.79 19.79 0 0 1-3.07-8.67A2 2 0 0 1 4.11 2h3a2 2 0 0 1 2 1.72 12.84 12.84 0 0 0 .7 2.81 2 2 0 0 1-.45 2.11L8.09 9.91a16 16 0 0 0 6 6l1.27-1.27a2 2 0 0 1 2.11-.45 12.84 12.84 0 0 0 2.81.7A2 2 0 0 1 22 16.92z"/></svg>

<div class="a" style="left:2208px;top:100.5px;width:320px;height:69px;border:2px solid #d1d5db;border-radius:12px;background:#fff;box-shadow:0 1px 2px rgba(0,0,0,.05);"></div>
<svg class="ic" style="left:2471.5px;top:118px" width="34" height="34" viewBox="0 0 24 24" stroke="#4b5563" stroke-width="1.9"><path d="m6 9 6 6 6-6"/></svg>

<svg class="ic" style="left:2560px;top:121px" width="28" height="28" viewBox="0 0 24 24" stroke="#1f2937" stroke-width="2.2"><path d="M15.2 3a2 2 0 0 1 1.4.6l3.8 3.8a2 2 0 0 1 .6 1.4V19a2 2 0 0 1-2 2H5a2 2 0 0 1-2-2V5a2 2 0 0 1 2-2z"/><path d="M17 21v-7a1 1 0 0 0-1-1H8a1 1 0 0 0-1 1v7"/><path d="M7 3v4a1 1 0 0 0 1 1h7"/></svg>

<div class="t b" style="left:2604px;top:114.5px;font-size:24.15px;color:#1f2937;">Save to workspace</div>
<!-- toolbar -->
<div class="a" style="left:1239px;top:202px;width:16px;height:16px;border-radius:50%;background:#9de8aa;"></div>
<svg class="ic" style="left:1295.0px;top:196.0px" width="28" height="28" viewBox="0 0 24 24" stroke="#4b5563" stroke-width="2.2"><line x1="12" x2="12" y1="2" y2="22"/><path d="M17 5H9.5a3.5 3.5 0 0 0 0 7h5a3.5 3.5 0 0 1 0 7H6"/></svg>

<svg class="ic" style="left:1375.0px;top:196.0px" width="28" height="28" viewBox="0 0 24 24" stroke="#4b5563" stroke-width="2.2"><line x1="12" x2="12" y1="2" y2="22"/><path d="M17 5H9.5a3.5 3.5 0 0 0 0 7h5a3.5 3.5 0 0 1 0 7H6"/></svg>

<svg class="ic" style="left:1455.0px;top:196.0px" width="28" height="28" viewBox="0 0 24 24" stroke="#4b5563" stroke-width="2.2"><path d="m7.5 4.27 9 5.15"/><path d="M21 8a2 2 0 0 0-1-1.73l-7-4a2 2 0 0 0-2 0l-7 4A2 2 0 0 0 3 8v8a2 2 0 0 0 1 1.73l7 4a2 2 0 0 0 2 0l7-4A2 2 0 0 0 21 16Z"/><path d="m3.3 7 8.7 5 8.7-5"/><path d="M12 22V12"/></svg>

<svg class="ic" style="left:1535.0px;top:196.0px" width="28" height="28" viewBox="0 0 24 24" stroke="#4b5563" stroke-width="2.2"><path d="M21 12a9 9 0 1 1-9-9c2.52 0 4.93 1 6.74 2.74L21 8"/><path d="M21 3v5h-5"/></svg>

<svg class="ic" style="left:1615.0px;top:196.0px" width="28" height="28" viewBox="0 0 24 24" stroke="#4b5563" stroke-width="2.2"><path d="m14.622 17.897-10.68-2.913"/><path d="M18.376 2.622a1 1 0 1 1 3.002 3.002L17.36 9.643a.5.5 0 0 0 0 .707l.944.944a2.41 2.41 0 0 1 0 3.408l-.944.944a.5.5 0 0 1-.707 0L8.354 7.348a.5.5 0 0 1 0-.707l.944-.944a2.41 2.41 0 0 1 3.408 0l.944.944a.5.5 0 0 0 .707 0z"/><path d="M9 8c-1.804 2.71-3.97 3.46-6.583 3.948a.507.507 0 0 0-.302.819l7.32 8.883a1 1 0 0 0 1.185.204C12.735 20.405 16 16.792 16 15"/></svg>

<div class="a" style="left:1671px;top:182px;width:76px;height:56px;border-radius:14px;background:#eef5fc;"></div>
<svg class="ic" style="left:1695.0px;top:196.0px" width="28" height="28" viewBox="0 0 24 24" stroke="#1d4573" stroke-width="2.2"><path d="m21.64 3.64-1.28-1.28a1.21 1.21 0 0 0-1.72 0L2.36 18.64a1.21 1.21 0 0 0 0 1.72l1.28 1.28a1.2 1.2 0 0 0 1.72 0L21.64 5.36a1.2 1.2 0 0 0 0-1.72"/><path d="m14 7 3 3"/><path d="M5 6v4"/><path d="M19 14v4"/><path d="M10 2v2"/><path d="M7 8H3"/><path d="M21 16h-4"/><path d="M11 3H9"/></svg>

<svg class="ic" style="left:1779.0px;top:196.0px" width="28" height="28" viewBox="0 0 24 24" stroke="#7b93aa" stroke-width="2"><path d="M9.94 15.5A2 2 0 0 0 8.5 14.06l-6.13-1.58a.5.5 0 0 1 0-.96L8.5 9.94A2 2 0 0 0 9.94 8.5l1.58-6.13a.5.5 0 0 1 .96 0L14.06 8.5A2 2 0 0 0 15.5 9.94l6.13 1.58a.5.5 0 0 1 0 .96L15.5 14.06a2 2 0 0 0-1.44 1.440l-1.58 6.13a.5.5 0 0 1-.96 0z"/><path d="M4 3v4"/><path d="M2 5h4"/><path d="M20 17v4"/><path d="M18 19h4"/><path d="M2 22 22 2"/></svg>

<svg class="ic" style="left:2816.0px;top:196.0px" width="28" height="28" viewBox="0 0 24 24" stroke="#4b5563" stroke-width="2"><path d="m16 6 4 14"/><path d="M12 6v14"/><path d="M8 8v12"/><path d="M4 4v16"/></svg>

<!-- editor -->
<div class="a" style="left:1211px;top:242px;width:1669px;height:4px;background:#e5e7eb;"></div>
<div class="a" style="left:1211px;top:246px;width:96px;height:302.5px;background:#f8f9fb;"></div>
<div class="a" style="left:1307px;top:415.5px;width:1571px;height:42px;border:3px solid #eeeeee;border-right:3px solid #eeeeee;"></div>
<div class="a" style="left:1307.5px;top:374px;width:2px;height:41px;background:#9a9a9a;"></div>
<div class="a" style="left:2851.5px;top:246px;width:1px;height:302px;background:#dddddd;"></div>
<div class="a" style="left:2852.5px;top:414px;width:27px;height:4px;background:#3a3a3a;"></div>
<div class="t m" style="left:1207px;top:247.0px;width:38px;text-align:right;height:42.5px;line-height:42.5px;font-size:30px;color:#999999;">1</div>
<div class="t m" style="left:1308px;top:248.2px;height:42.5px;line-height:42.5px;font-size:28px;color:#000;white-space:pre;"><span style="color:#0000ff">import</span><span style="color:#000000"> * as wmill </span><span style="color:#0000ff">from</span> <span style="color:#a31515">"windmill-client@^1.158.2"</span></div>
<div class="t m" style="left:1207px;top:289.5px;width:38px;text-align:right;height:42.5px;line-height:42.5px;font-size:30px;color:#999999;">2</div>
<div class="t m" style="left:1308px;top:290.7px;height:42.5px;line-height:42.5px;font-size:28px;color:#000;white-space:pre;"></div>
<div class="t m" style="left:1207px;top:332.0px;width:38px;text-align:right;height:42.5px;line-height:42.5px;font-size:30px;color:#999999;">3</div>
<div class="t m" style="left:1308px;top:333.2px;height:42.5px;line-height:42.5px;font-size:28px;color:#000;white-space:pre;"><span style="color:#0000ff">export</span> <span style="color:#0000ff">async</span> <span style="color:#0000ff">function</span><span style="color:#000000"> main</span><span style="color:#0431fa">(</span><span style="color:#000000">approver?: string</span><span style="color:#0431fa">)</span> <span style="color:#0431fa">{</span></div>
<div class="t m" style="left:1207px;top:374.5px;width:38px;text-align:right;height:42.5px;line-height:42.5px;font-size:30px;color:#999999;">4</div>
<div class="t m" style="left:1308px;top:375.7px;height:42.5px;line-height:42.5px;font-size:28px;color:#000;white-space:pre;">  <span style="color:#0000ff">return</span><span style="color:#000000"> wmill.getResumeUrls</span><span style="color:#319331">(</span><span style="color:#000000">approver</span><span style="color:#319331">)</span></div>
<div class="t m" style="left:1207px;top:417.0px;width:38px;text-align:right;height:42.5px;line-height:42.5px;font-size:30px;color:#0b216f;">5</div>
<div class="t m" style="left:1308px;top:418.2px;height:42.5px;line-height:42.5px;font-size:28px;color:#000;white-space:pre;"><span style="color:#0431fa">}</span></div>

<div class="a" style="left:1211px;top:548px;width:1669px;height:2px;background:#e5e7eb;"></div>
<!-- tabs 1 -->
<div class="t" style="left:1242px;top:558px;font-size:29.4px;color:#2d3748;">Step Input</div>
<div class="t" style="left:1444px;top:558px;font-size:30.2px;color:#2d3748;">Test this step</div>
<div class="t" style="left:1686.5px;top:558px;font-size:29.2px;color:#2d3748;">Advanced</div>
<div class="a" style="left:1654px;top:606px;width:197.5px;height:4px;background:#3b4556;"></div>
<div class="a" style="left:1211px;top:610px;width:1669px;height:2px;background:#e5e7eb;"></div>
<!-- tabs 2 -->
<div class="a" style="left:1902px;top:620.5px;width:147.5px;height:39.5px;border-radius:10px;background:#eef4fd;"></div>
<div class="t" style="left:1242px;top:621.4px;font-size:28.6px;color:#2d3748;">Retries</div>
<div class="t" style="left:1398.5px;top:621.4px;font-size:28.5px;color:#2d3748;">Runtime</div>
<div class="t" style="left:1570.5px;top:621.4px;font-size:28.7px;color:#2d3748;">Cache</div>
<div class="t" style="left:1719.5px;top:621.4px;font-size:28.8px;color:#2d3748;">Early Stop</div>
<div class="t" style="left:1919px;top:621.4px;font-size:28.9px;color:#1f3ba8;">Suspend</div>
<div class="t" style="left:2097.5px;top:621.4px;font-size:28.4px;color:#2d3748;">Sleep</div>
<div class="t" style="left:2235.5px;top:621.4px;font-size:29.2px;color:#2d3748;">Mock</div>
<div class="t" style="left:2372px;top:621.4px;font-size:29.4px;color:#2d3748;">Shared Directory</div>
<div class="a" style="left:1886px;top:669px;width:180px;height:4px;background:#3b4556;"></div>
<div class="a" style="left:1211px;top:673px;width:1669px;height:2px;background:#e5e7eb;"></div>
<!-- suspend section -->
<div class="t b" style="left:1242px;top:717px;font-size:32.5px;color:#1f2937;">Suspend/Approval/Prompt</div>
<svg class="ic" style="left:1667.0px;top:725.0px" width="28" height="28" viewBox="0 0 24 24" stroke="#374151" stroke-width="2"><circle cx="12" cy="12" r="10"/><path d="M12 16v-4"/><path d="M12 8h.01"/></svg>

<div class="a" style="left:1734.5px;top:706.5px;width:384px;height:61.5px;border:2px solid #e5e7eb;border-radius:12px;background:#fff;"></div>
<div class="t b" style="left:1761px;top:716.5px;font-size:24.2px;color:#1f2937;">Approval/Prompt helpers</div>
<svg class="ic" style="left:2067.5px;top:725.5px" width="25" height="25" viewBox="0 0 24 24" stroke="#1f2937" stroke-width="2"><circle cx="12" cy="12" r="10"/><path d="M9.09 9a3 3 0 0 1 5.83 1c0 2-3 3-3 3"/><path d="M12 17h.01"/></svg>

<div class="a" style="left:1242.5px;top:784px;width:89px;height:48px;border-radius:24px;background:#3b62e0;"></div>
<div class="a" style="left:1287px;top:788px;width:40px;height:40px;border-radius:50%;background:#fff;"></div>
<div class="t" style="left:1346.5px;top:788px;font-size:30.2px;color:#1f2937;">Suspend flow execution until events/approvals received</div>
<div class="t" style="left:1274px;top:857.5px;font-size:24.2px;color:#2d3748;">Core</div>
<div class="t" style="left:1392px;top:857.5px;font-size:23.8px;color:#2d3748;">Form</div>
<div class="t" style="left:1513px;top:857.5px;font-size:24.6px;color:#2d3748;">Permissions</div>
<div class="a" style="left:1243px;top:913.5px;width:1605px;height:2px;background:#e5e7eb;"></div>
<div class="a" style="left:1243px;top:909.5px;width:118px;height:4.5px;background:#3b4556;"></div>
<!-- green box -->
<div class="a" style="left:1229px;top:940px;width:1634px;height:145.5px;border:3px solid #2a6e35;background:#f6faf6;"></div>
<div class="t" style="left:1243px;top:952.7px;font-size:29.8px;color:#4b5563;">Number of approvals/events required for resuming flow</div>
<div class="a" style="left:1242.5px;top:996.5px;width:1606px;height:69px;border:2px solid #cdd1d8;border-radius:12px;background:#f6faf7;box-shadow:0 1px 2px rgba(0,0,0,.05);"></div>
<div class="t" style="left:1259.5px;top:1010.7px;font-size:29px;color:#1f2937;">1</div>
<!-- timeout -->
<div class="t" style="left:1243px;top:1102px;font-size:29.6px;color:#4b5563;">Timeout</div>
<div class="t" style="left:1770.5px;top:1157.8px;font-size:24px;color:#1f2937;">Sec</div>
<div class="t" style="left:1899px;top:1157.8px;font-size:24px;color:#1f2937;">Min</div>
<div class="t" style="left:2026.5px;top:1157.8px;font-size:24.5px;color:#1f2937;">Hour</div>
<div class="t" style="left:2154.5px;top:1157.8px;font-size:23.8px;color:#1f2937;">Day</div>
<div class="a" style="left:1242.5px;top:1194.3px;width:496px;height:69px;border:2px solid #d1d5db;border-radius:12px;background:#fff;box-shadow:0 1px 2px rgba(0,0,0,.05);"></div>
<div class="t" style="left:1259.5px;top:1208.5px;font-size:29.4px;color:#1f2937;">1800 seconds</div>
<div class="a" style="left:1770.5px;top:1194px;width:113px;height:69.5px;border:2px solid #d1d5db;border-radius:12px;background:#fff;box-shadow:0 1px 2px rgba(0,0,0,.05);"></div>
<div class="a" style="left:1898.3px;top:1194px;width:113px;height:69.5px;border:2px solid #d1d5db;border-radius:12px;background:#fff;box-shadow:0 1px 2px rgba(0,0,0,.05);"></div>
<div class="a" style="left:2026.5px;top:1194px;width:113px;height:69.5px;border:2px solid #d1d5db;border-radius:12px;background:#fff;box-shadow:0 1px 2px rgba(0,0,0,.05);"></div>
<div class="a" style="left:2154.3px;top:1194px;width:113px;height:69.5px;border:2px solid #d1d5db;border-radius:12px;background:#fff;box-shadow:0 1px 2px rgba(0,0,0,.05);"></div>
<div class="t" style="left:1917.5px;top:1208.7px;font-size:29.8px;color:#1f2937;">30</div>


</body></html>
